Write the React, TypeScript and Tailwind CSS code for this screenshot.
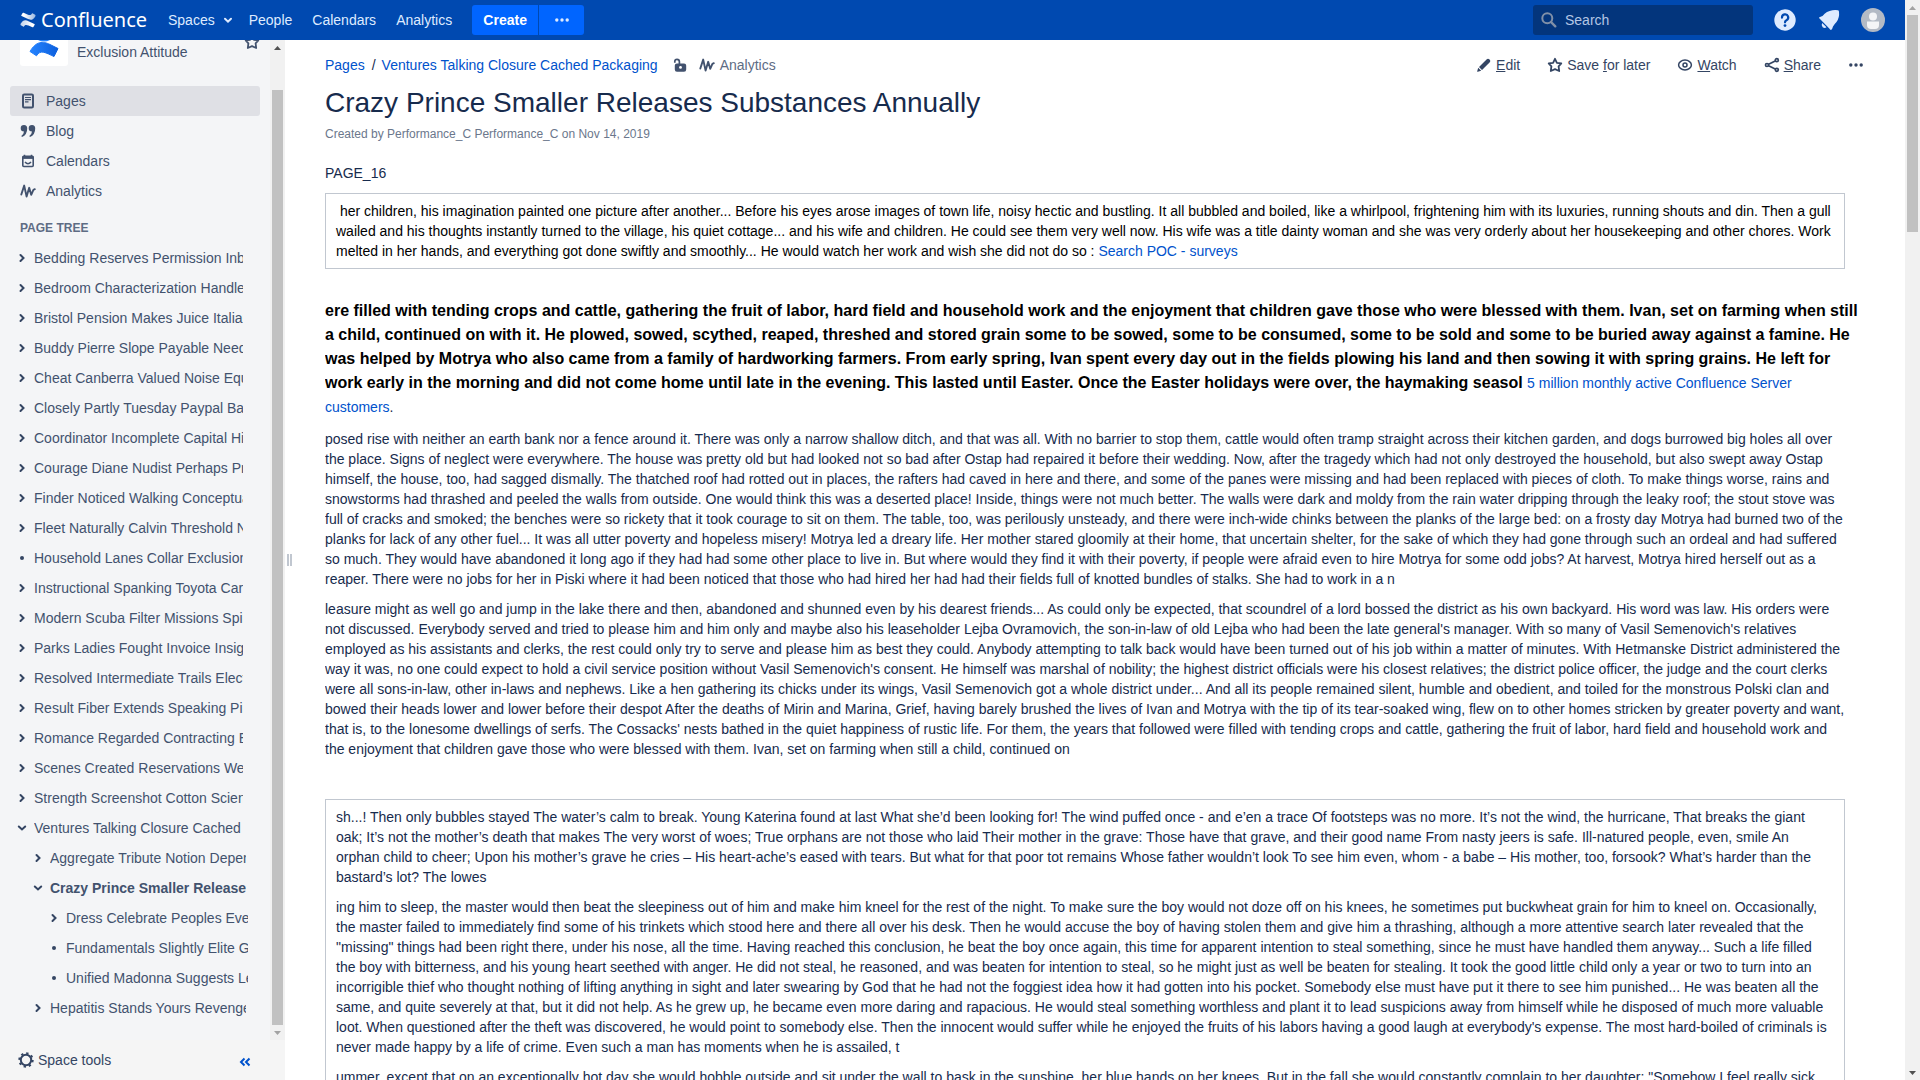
import React from "react";

type IconProps = { className?: string };

const AnalyticsIcon = ({ className = "" }: IconProps) => (
  <svg viewBox="0 0 16 16" className={`size-4 shrink-0 ${className}`} fill="none" stroke="currentColor" strokeLinecap="round" strokeLinejoin="round" aria-hidden="true">
    <path d="M1.3 11.5 L4.2 2.6 L6.6 13.6 L9.2 4.8 L11.2 11.8 L13.4 6.8 L14.8 6.2" strokeWidth="1.9" />
  </svg>
);
const StarIcon = ({ className = "" }: IconProps) => (
  <svg viewBox="0 0 16 16" className={`size-4 shrink-0 ${className}`} fill="none" stroke="currentColor" strokeWidth="1.8" strokeLinejoin="round" aria-hidden="true">
    <path d="M8 1.8 L9.9 5.8 L14.3 6.3 L11.6 9.3 L12.2 14 L8 12.2 L3.8 14 L4.4 9.3 L1.7 6.3 L6.1 5.8 Z" />
  </svg>
);
const Dots = ({ className = "" }: IconProps) => (
  <svg viewBox="0 0 16 16" className={`size-4 shrink-0 ${className}`} fill="currentColor" aria-hidden="true">
    <circle cx="2.8" cy="8" r="1.7" />
    <circle cx="8" cy="8" r="1.7" />
    <circle cx="13.2" cy="8" r="1.7" />
  </svg>
);
const Arrow = ({ up = false, className = "" }: { up?: boolean; className?: string }) => (
  <svg viewBox="0 0 15 15" className={`size-[15px] shrink-0 ${className}`} fill="currentColor" aria-hidden="true">
    <path d={up ? "M4 10 L7.5 6 L11 10 Z" : "M4 6 L7.5 10 L11 6 Z"} />
  </svg>
);
const Chevron = ({ kind }: { kind: string }) => (
  <svg viewBox="0 0 12 12" className="size-3 shrink-0 text-[#344563]" fill="none" stroke="currentColor" strokeWidth="2" aria-hidden="true">
    {kind === "closed" && <path d="M4.5 3 L7.5 6 L4.5 9" strokeLinecap="round" />}
    {kind === "open" && <path d="M2.8 4.5 L6 7.5 L9.2 4.5" strokeLinecap="round" />}
    {kind === "leaf" && <circle cx="6" cy="6" r="2" fill="currentColor" stroke="none" />}
  </svg>
);

const tree: [number, string, string][] = [
  [0, "closed", "Bedding Reserves Permission Inbox"],
  [0, "closed", "Bedroom Characterization Handled"],
  [0, "closed", "Bristol Pension Makes Juice Italian"],
  [0, "closed", "Buddy Pierre Slope Payable Needle"],
  [0, "closed", "Cheat Canberra Valued Noise Equal"],
  [0, "closed", "Closely Partly Tuesday Paypal Ball"],
  [0, "closed", "Coordinator Incomplete Capital Hill"],
  [0, "closed", "Courage Diane Nudist Perhaps Proof"],
  [0, "closed", "Finder Noticed Walking Conceptual"],
  [0, "closed", "Fleet Naturally Calvin Threshold Not"],
  [0, "leaf", "Household Lanes Collar Exclusions"],
  [0, "closed", "Instructional Spanking Toyota Cart"],
  [0, "closed", "Modern Scuba Filter Missions Spin"],
  [0, "closed", "Parks Ladies Fought Invoice Insight"],
  [0, "closed", "Resolved Intermediate Trails Elected"],
  [0, "closed", "Result Fiber Extends Speaking Pine"],
  [0, "closed", "Romance Regarded Contracting Era"],
  [0, "closed", "Scenes Created Reservations Went"],
  [0, "closed", "Strength Screenshot Cotton Science"],
  [0, "open", "Ventures Talking Closure Cached Packaging"],
  [1, "closed", "Aggregate Tribute Notion Depending"],
  [1, "open", "Crazy Prince Smaller Releases"],
  [2, "closed", "Dress Celebrate Peoples Events"],
  [2, "leaf", "Fundamentals Slightly Elite Group"],
  [2, "leaf", "Unified Madonna Suggests Lead"],
  [1, "closed", "Hepatitis Stands Yours Revenge"],
];
const indents = ["pl-4 pr-[27px]", "pl-8 pr-6", "pl-12 pr-[22px]"];

function Header() {
  return (
    <header className="flex h-10 shrink-0 items-center bg-[#0049b0] pr-5 pl-5 text-[#deebff]">
      <a href="#home" className="flex w-32 items-center text-white" aria-label="Confluence">
        <svg viewBox="0 0 16 16" className="size-4 shrink-0" aria-hidden="true">
          <defs>
            <linearGradient id="logoLow" x1="1" y1="0" x2="0" y2="0"><stop offset=".2" stopColor="#fff" /><stop offset="1" stopColor="#fff" stopOpacity=".75" /></linearGradient>
            <linearGradient id="logoHigh" x1="0" y1="0" x2="1" y2="0"><stop offset=".2" stopColor="#fff" /><stop offset="1" stopColor="#fff" stopOpacity=".6" /></linearGradient>
          </defs>
          <path fill="url(#logoLow)" d="M.6 11.8 C3.4 7.2 5.6 7.8 9 9.4 L14.4 11.9 Q15 12.2 14.7 12.8 L13.4 15 Q13 15.5 12.4 15.2 C6.6 12.6 5.6 12 4 14.4 Q3.7 14.9 3.1 14.6 L.8 13.2 Q.2 12.6 .6 11.8Z" />
          <path fill="url(#logoHigh)" d="M15.4 4.2 C12.6 8.8 10.4 8.2 7 6.6 L1.6 4.1 Q1 3.8 1.3 3.2 L2.6 1 Q3 .5 3.6 .8 C9.4 3.4 10.4 4 12 1.6 Q12.3 1.1 12.9 1.4 L15.2 2.8 Q15.8 3.4 15.4 4.2Z" />
        </svg>
        <span className="pl-[5px] font-['Noto_Sans',sans-serif] text-xl leading-10">Confluence</span>
      </a>
      <nav className="flex items-center pl-5">
        <a href="#spaces" className="mr-4 flex items-center gap-2">
          Spaces
          <svg viewBox="0 0 10 10" className="size-2.5" fill="none" stroke="currentColor" strokeWidth="2" aria-hidden="true"><path d="M2 3.7 L5 6.6 L8 3.7" strokeLinecap="round" /></svg>
        </a>
        <a href="#people" className="mr-5">People</a>
        <a href="#calendars" className="mr-5">Calendars</a>
        <a href="#analytics" className="mr-5">Analytics</a>
        <button className="h-[30px] w-[66px] rounded-l-[3px] bg-[#0065ff] font-bold text-white">Create</button>
        <button aria-label="More create options" className="ml-px flex h-[30px] w-[45px] items-center justify-center rounded-r-[3px] bg-[#0065ff]">
          <Dots className="size-3.5" />
        </button>
      </nav>
      <label className="ml-auto flex h-[30px] w-[220px] items-center rounded-[3px] bg-[#03357c] pl-2">
        <svg viewBox="0 0 16 16" className="size-4" fill="none" stroke="#8090a8" strokeWidth="2" aria-hidden="true">
          <circle cx="6.3" cy="6.3" r="5" />
          <path d="M10 10 L14.3 14.3" strokeWidth="2.4" strokeLinecap="round" />
        </svg>
        <input type="text" aria-label="Search" placeholder="Search" className="ml-2 w-40 bg-transparent outline-none placeholder:text-[#b3c6e4]" />
      </label>
      <button aria-label="Help" className="ml-5">
        <svg viewBox="0 0 24 24" className="size-6" aria-hidden="true">
          <circle cx="12" cy="12" r="10.7" fill="#deebff" />
          <path d="M9 9.6 A3.1 3.1 0 1 1 13.5 12.2 Q12 13 12 14.3" fill="none" stroke="#0049b0" strokeWidth="2.2" strokeLinecap="round" />
          <circle cx="12" cy="17.6" r="1.4" fill="#0049b0" />
        </svg>
      </button>
      <button aria-label="Notifications" className="ml-5">
        <svg viewBox="0 0 24 24" className="size-6" fill="#deebff" aria-hidden="true">
          <path d="M2 9.5 Q3.4 8.6 5.5 8 Q9.5 3 15.5 2.2 Q19 1.9 21 2.3 Q22 2.5 22 4 Q22.7 9.5 19.5 14 Q17 16.5 16 18.6 Q15.5 21 14 22 Q13 21.5 12.3 20.5 L3 11 Q2 10.2 2 9.5Z" />
          <path d="M5.2 15 L9.5 19.3 Q7.5 20.8 5.7 19.2 Q3.8 17.4 5.2 15Z" />
        </svg>
      </button>
      <button aria-label="Profile" className="ml-5">
        <svg viewBox="0 0 24 24" className="size-6" aria-hidden="true">
          <circle cx="12" cy="12" r="12" fill="#b3bac5" />
          <circle cx="12" cy="8.5" r="4" fill="#f4f5f7" />
          <path d="M6 13.5 H18 V17 A4 4 0 0 1 14 21 H10 A4 4 0 0 1 6 17 Z" fill="#f4f5f7" />
        </svg>
      </button>
    </header>
  );
}

function Sidebar() {
  return (
    <aside className="flex w-[285px] shrink-0 flex-col bg-[#f4f5f7] text-[#42526e]">
      <div className="flex min-h-0 flex-1">
        <div className="min-w-0 flex-1 overflow-hidden">
          <div className="flex h-[26px] items-end pr-2.5 pl-5">
            <span className="flex h-[26px] w-12 justify-center overflow-hidden rounded-b-[3px] bg-white">
              <svg viewBox="0 0 30 26" className="h-[26px] w-[30px]" aria-hidden="true">
                <defs>
                  <linearGradient id="wave" x1="0" x2="1"><stop offset="0" stopColor="#2684ff" /><stop offset="1" stopColor="#0c5fdd" /></linearGradient>
                </defs>
                <path d="M9 0 H21 Q15 3 9 0Z" fill="#2684ff" />
                <path d="M1 11.5 C7 1 14 1 21 4.5 L29 8.5 L25 16.5 C17 13 11.5 9 7.5 15.8 Z" fill="url(#wave)" stroke="url(#wave)" strokeLinejoin="round" />
              </svg>
            </span>
            <a href="#space" className="self-start pt-0.5 pl-[9px]">Exclusion Attitude</a>
            <button aria-label="Favourite space" className="ml-auto self-start overflow-hidden"><StarIcon className="-mt-1.5" /></button>
          </div>
          <nav className="px-2.5 pt-5">
            {["Pages", "Blog", "Calendars", "Analytics"].map((name) => (
              <a key={name} href={`#${name}`} className={`flex h-[30px] items-center gap-2.5 rounded-[3px] pl-2.5 ${name === "Pages" ? "bg-[#dfe0e5]" : ""}`}>
                {name === "Analytics" && <AnalyticsIcon />}
                {name === "Pages" && (
                  <svg viewBox="0 0 16 16" className="size-4" fill="none" stroke="currentColor" aria-hidden="true">
                    <rect x="3" y="1.5" width="10" height="13" rx="1.2" strokeWidth="2" />
                    <path d="M5 4.5 H11 M5 6.7 H11 M5 8.9 H8.5" strokeWidth="1.2" />
                  </svg>
                )}
                {name === "Blog" && (
                  <svg viewBox="0 0 16 16" className="size-4" fill="currentColor" aria-hidden="true">
                    <path d="M4 2 A3.3 3.3 0 0 1 7.2 5.4 Q7.3 11.5 2 14 L1.3 13 Q3.9 11.2 4 8.6 A3.3 3.3 0 0 1 4 2Z" />
                    <path d="M12 2 A3.3 3.3 0 0 1 15.2 5.4 Q15.3 11.5 10 14 L9.3 13 Q11.9 11.2 12 8.6 A3.3 3.3 0 0 1 12 2Z" />
                  </svg>
                )}
                {name === "Calendars" && (
                  <svg viewBox="0 0 16 16" className="size-4" fill="none" stroke="currentColor" aria-hidden="true">
                    <rect x="2.8" y="3.2" width="10.4" height="10.3" rx="1" strokeWidth="1.6" />
                    <path d="M2.5 4.6 H13.5" strokeWidth="2.6" />
                    <path d="M4.5 1.8 V4 M11.5 1.8 V4 M5 9 Q8 12.5 11 9" strokeWidth="1.5" />
                  </svg>
                )}
                {name}
              </a>
            ))}
          </nav>
          <h2 className="px-5 pt-3 text-xs leading-5 font-bold text-[#5e6c84]">PAGE TREE</h2>
          <ul className="pt-[5px]">
            {tree.map(([level, kind, name]) => (
              <li key={name} className={`flex h-[30px] items-center gap-1.5 ${indents[level]}`}>
                <Chevron kind={kind} />
                <a href={`#${name}`} className={`min-w-0 flex-1 overflow-hidden whitespace-nowrap ${name.startsWith("Crazy") ? "font-bold" : ""}`}>{name}</a>
              </li>
            ))}
          </ul>
        </div>
        <div className="flex w-[15px] shrink-0 flex-col bg-[#f1f1f1]">
          <Arrow up className="text-[#505050]" />
          <div className="mx-0.5 mt-[35px] flex-1 bg-[#c1c1c1]" />
          <Arrow className="text-[#a3a3a3]" />
        </div>
      </div>
      <div className="flex h-10 shrink-0 items-center bg-[#f5f5f5] pr-[34px] pl-[18px] text-[#344563]">
        <button className="flex items-center gap-1">
          <svg viewBox="0 0 16 16" className="size-4" fill="none" stroke="currentColor" aria-hidden="true">
            <circle cx="8" cy="8" r="5.2" strokeWidth="2" />
            <circle cx="8" cy="8" r="6.7" strokeWidth="2" strokeDasharray="2.3 2.96" />
          </svg>
          Space tools
        </button>
        <button aria-label="Collapse sidebar" className="ml-auto pt-1 text-[#0052cc]">
          <svg viewBox="0 0 12 12" className="size-3" fill="none" stroke="currentColor" strokeWidth="2" aria-hidden="true">
            <path d="M5.5 2.5 L2 6 L5.5 9.5 M10.5 2.5 L7 6 L10.5 9.5" />
          </svg>
        </button>
      </div>
    </aside>
  );
}

const ActionBar = () => (
  <div className="-mr-[19px] flex items-center gap-[27px] text-[#344563]">
    <button className="flex items-center gap-1">
      <svg viewBox="0 0 16 16" className="size-4" fill="currentColor" aria-hidden="true">
        <path d="M10.8 2.2 Q12 1 13.6 2.4 Q15 4 13.8 5.2 L6 13 L3 10 Z M2.2 10.8 L5.2 13.8 L1.8 14.8 Q1 15 1.2 14.2 Z" />
      </svg>
      <span><u>E</u>dit</span>
    </button>
    <button className="flex items-center gap-1"><StarIcon /><span>Save <u>f</u>or later</span></button>
    <button className="flex items-center gap-1">
      <svg viewBox="0 0 16 16" className="size-4" fill="none" stroke="currentColor" strokeWidth="1.5" aria-hidden="true">
        <ellipse cx="8" cy="8" rx="6.4" ry="4.9" />
        <circle cx="8" cy="8" r="2" />
      </svg>
      <span><u>W</u>atch</span>
    </button>
    <button className="flex items-center gap-1">
      <svg viewBox="0 0 16 16" className="size-4" fill="none" stroke="currentColor" strokeWidth="1.7" aria-hidden="true">
        <circle cx="3" cy="8" r="1.5" /><circle cx="12.8" cy="3.2" r="1.5" /><circle cx="12.8" cy="12.8" r="1.5" />
        <path d="M4.6 7.2 L11.2 4 M4.6 8.8 L11.2 12" />
      </svg>
      <span><u>S</u>hare</span>
    </button>
    <button aria-label="More actions"><Dots /></button>
  </div>
);

export default function App() {
  return (
    <div className="flex h-screen overflow-hidden bg-white font-['Liberation_Sans',Arial,sans-serif] text-sm leading-5 text-[#172b4d]">
      <div className="flex min-w-0 flex-1 flex-col">
        <Header />
        <div className="flex min-h-0 flex-1">
          <Sidebar />
          <div className="flex w-10 shrink-0 items-center pl-0.5" role="separator">
            <span className="flex h-3 w-[5px] justify-between"><i className="w-0.5 bg-[#c1c7d0]" /><i className="w-0.5 bg-[#c1c7d0]" /></span>
          </div>
          <main className="min-w-0 flex-1 overflow-hidden pt-[15px] pr-[60px]">
            <div className="flex items-center justify-between">
              <nav className="flex items-center" aria-label="Breadcrumb">
                <a href="#pages" className="text-[#0052cc]">Pages</a>
                <span className="pr-1.5 pl-[7px]">/</span>
                <a href="#ventures" className="text-[#0052cc]">Ventures Talking Closure Cached Packaging</a>
                <svg viewBox="0 0 16 16" className="ml-3.5 size-4" fill="none" stroke="#42526e" aria-label="Unrestricted">
                  <path d="M2.8 5.8 V4.6 Q2.8 2.3 5 2.3 Q7.4 2.3 7.4 4.8 V7.5" strokeWidth="1.7" />
                  <rect x="4" y="7.6" width="9" height="6" rx="1" strokeWidth="2.4" fill="#42526e" />
                  <circle cx="8.5" cy="10.4" r="1.4" fill="#fff" stroke="none" />
                </svg>
                <a href="#page-analytics" className="ml-[11px] flex items-center gap-[5px] text-[#5e6c84]"><AnalyticsIcon className="text-[#42526e]" />Analytics</a>
              </nav>
              <ActionBar />
            </div>
            <h1 className="mt-3 text-[28px] leading-8">Crazy Prince Smaller Releases Substances Annually</h1>
            <p className="mt-[5px] text-xs leading-5 text-[#6b778c]">Created by Performance_C Performance_C on Nov 14, 2019</p>
            <p className="mt-[19px]">PAGE_16</p>
            <div className="mt-2.5 border border-[#c1c7d0] px-2.5 py-[7px] text-black">
              &nbsp;her children, his imagination painted one picture after another... Before his eyes arose images of town life, noisy hectic and bustling. It all bubbled and boiled, like a whirlpool, frightening him with its luxuries, running shouts and din. Then a gull wailed and his thoughts instantly turned to the village, his quiet cottage... and his wife and children. He could see them very well now. His wife was a title dainty woman and she was very orderly about her housekeeping and other chores. Work melted in her hands, and everything got done swiftly and smoothly... He would watch her work and wish she did not do so : <a href="#poc" className="text-[#0052cc]">Search POC - surveys</a>
            </div>
            <p className="mt-[30px] -mr-4 leading-6">
              <strong className="text-base text-black">ere filled with tending crops and cattle, gathering the fruit of labor, hard field and household work and the enjoyment that children gave those who were blessed with them. Ivan, set on farming when still a child, continued on with it. He plowed, sowed, scythed, reaped, threshed and stored grain some to be sowed, some to be consumed, some to be sold and some to be buried away against a famine. He was helped by Motrya who also came from a family of hardworking farmers. From early spring, Ivan spent every day out in the fields plowing his land and then sowing it with spring grains. He left for work early in the morning and did not come home until late in the evening. This lasted until Easter. Once the Easter holidays were over, the haymaking seasol </strong>
              <a href="#customers" className="text-[#0052cc]">5 million monthly active Confluence Server customers</a>.
            </p>
            <p className="mt-2.5">posed rise with neither an earth bank nor a fence around it. There was only a narrow shallow ditch, and that was all. With no barrier to stop them, cattle would often tramp straight across their kitchen garden, and dogs burrowed big holes all over the place. Signs of neglect were everywhere. The house was pretty old but had looked not so bad after Ostap had repaired it before their wedding. Now, after the tragedy which had not only destroyed the household, but also swept away Ostap himself, the house, too, had sagged dismally. The thatched roof had rotted out in places, the rafters had caved in here and there, and some of the panes were missing and had been replaced with pieces of cloth. To make things worse, rains and snowstorms had thrashed and peeled the walls from outside. One would think this was a deserted place! Inside, things were not much better. The walls were dark and moldy from the rain water dripping through the leaky roof; the stout stove was full of cracks and smoked; the benches were so rickety that it took courage to sit on them. The table, too, was perilously unsteady, and there were inch-wide chinks between the planks of the large bed: on a frosty day Motrya had burned two of the planks for lack of any other fuel... It was all utter poverty and hopeless misery! Motrya led a dreary life. Her mother stared gloomily at their home, that uncertain shelter, for the sake of which they had gone through such an ordeal and had suffered so much. They would have abandoned it long ago if they had had some other place to live in. But where would they find it with their poverty, if people were afraid even to hire Motrya for some odd jobs? At harvest, Motrya hired herself out as a reaper. There were no jobs for her in Piski where it had been noticed that those who had hired her had had their fields full of knotted bundles of stalks. She had to work in a n</p>
            <p className="mt-2.5">leasure might as well go and jump in the lake there and then, abandoned and shunned even by his dearest friends... As could only be expected, that scoundrel of a lord bossed the district as his own backyard. His word was law. His orders were not discussed. Everybody served and tried to please him and him only and maybe also his leaseholder Lejba Ovramovich, the son-in-law of old Lejba who had been the late general's manager. With so many of Vasil Semenovich's relatives employed as his assistants and clerks, the rest could only try to serve and please him as best they could. Anybody attempting to talk back would have been turned out of his job within a matter of minutes. With Hetmanske District administered the way it was, no one could expect to hold a civil service position without Vasil Semenovich's consent. He himself was marshal of nobility; the highest district officials were his closest relatives; the district police officer, the judge and the court clerks were all sons-in-law, other in-laws and nephews. Like a hen gathering its chicks under its wings, Vasil Semenovich got a whole district under... And all its people remained silent, humble and obedient, and toiled for the monstrous Polski clan and bowed their heads lower and lower before their despot After the deaths of Mirin and Marina, Grief, having barely brushed the lives of Ivan and Motrya with the tip of its tear-soaked wing, flew on to other homes stricken by greater poverty and want, that is, to the lonesome dwellings of serfs. The Cossacks' nests bathed in the quiet happiness of rustic life. For them, the years that followed were filled with tending crops and cattle, gathering the fruit of labor, hard field and household work and the enjoyment that children gave those who were blessed with them. Ivan, set on farming when still a child, continued on</p>
            <div className="mt-10 border border-[#c1c7d0] px-2.5 py-[7px]">
              <p>sh...! Then only bubbles stayed The water’s calm to break. Young Katerina found at last What she’d been looking for! The wind puffed once - and e’en a trace Of footsteps was no more. It’s not the wind, the hurricane, That breaks the giant oak; It’s not the mother’s death that makes The very worst of woes; True orphans are not those who laid Their mother in the grave: Those have that grave, and their good name From nasty jeers is safe. Ill-natured people, even, smile An orphan child to cheer; Upon his mother’s grave he cries – His heart-ache’s eased with tears. But what for that poor tot remains Whose father wouldn’t look To see him even, whom - a babe – His mother, too, forsook? What’s harder than the bastard’s lot? The lowes</p>
              <p className="mt-2.5">ing him to sleep, the master would then beat the sleepiness out of him and make him kneel for the rest of the night. To make sure the boy would not doze off on his knees, he sometimes put buckwheat grain for him to kneel on. Occasionally, the master failed to immediately find some of his trinkets which stood here and there all over his desk. Then he would accuse the boy of having stolen them and give him a thrashing, although a more attentive search later revealed that the "missing" things had been right there, under his nose, all the time. Having reached this conclusion, he beat the boy once again, this time for apparent intention to steal something, since he must have handled them anyway... Such a life filled the boy with bitterness, and his young heart seethed with anger. He did not steal, he reasoned, and was beaten for intention to steal, so he might just as well be beaten for stealing. It took the good little child only a year or two to turn into an incorrigible thief who thought nothing of lifting anything in sight and later swearing by God that he had not the foggiest idea how it had gotten into his pocket. Somebody else must have put it there to see him punished... He was beaten all the same, and quite severely at that, but it did not help. As he grew up, he became even more daring and rapacious. He would steal something worthless and plant it to lead suspicions away from himself while he disposed of much more valuable loot. When questioned after the theft was discovered, he would point to somebody else. Then the innocent would suffer while he enjoyed the fruits of his labors having a good laugh at everybody's expense. The most hard-boiled of criminals is never made happy by a life of crime. Even such a man has moments when he is assailed, t</p>
              <p className="mt-2.5">ummer, except that on an exceptionally hot day she would hobble outside and sit under the wall to bask in the sunshine, her blue hands on her knees. But in the fall she would constantly complain to her daughter: "Somehow I feel really sick</p>
            </div>
          </main>
        </div>
      </div>
      <div className="flex w-[15px] shrink-0 flex-col bg-[#f1f1f1]" aria-hidden="true">
        <Arrow up className="text-[#a3a3a3]" />
        <div className="mx-0.5 h-[217px] bg-[#c1c1c1]" />
        <Arrow className="mt-auto text-[#505050]" />
      </div>
    </div>
  );
}
